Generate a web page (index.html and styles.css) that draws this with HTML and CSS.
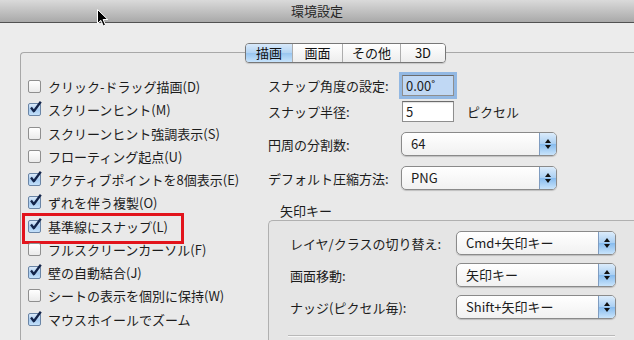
FILE: index.html
```html
<!DOCTYPE html>
<html lang="ja">
<head>
  <meta charset="UTF-8" />
  <title>環境設定</title>
  <link rel="stylesheet" href="styles.css">
</head>
<body>

<div class="window">
  <div class="titlebar">環境設定</div>

  <svg class="cursor" width="14" height="20" viewBox="0 0 14 20">
    <path d="M1.5 1.5 V15.5 L4.8 12.3 L7.3 18 L9.5 17 L7.1 11.5 H11.8 Z" fill="#000" stroke="#fff" stroke-width="1"/>
  </svg>

  <div class="tabbox">
    <div class="tabs">
      <span class="tab active">描画</span>
      <span class="tab">画面</span>
      <span class="tab">その他</span>
      <span class="tab">3D</span>
    </div>

    <div class="panel">
      <div class="checks">
        <div class="check"><span class="box"></span>クリック-ドラッグ描画(D)</div>
        <div class="check"><span class="box on"><svg width="16" height="16" viewBox="0 0 16 16"><path d="M3 6.5 L5.8 10.2 L12.8 0.8" /></svg></span>スクリーンヒント(M)</div>
        <div class="check"><span class="box"></span>スクリーンヒント強調表示(S)</div>
        <div class="check"><span class="box"></span>フローティング起点(U)</div>
        <div class="check"><span class="box on"><svg width="16" height="16" viewBox="0 0 16 16"><path d="M3 6.5 L5.8 10.2 L12.8 0.8" /></svg></span>アクティブポイントを8個表示(E)</div>
        <div class="check"><span class="box on"><svg width="16" height="16" viewBox="0 0 16 16"><path d="M3 6.5 L5.8 10.2 L12.8 0.8" /></svg></span>ずれを伴う複製(O)</div>
        <div class="check marked"><span class="box on"><svg width="16" height="16" viewBox="0 0 16 16"><path d="M3 6.5 L5.8 10.2 L12.8 0.8" /></svg></span>基準線にスナップ(L)</div>
        <div class="check"><span class="box"></span>フルスクリーンカーソル(F)</div>
        <div class="check"><span class="box on"><svg width="16" height="16" viewBox="0 0 16 16"><path d="M3 6.5 L5.8 10.2 L12.8 0.8" /></svg></span>壁の自動結合(J)</div>
        <div class="check"><span class="box"></span>シートの表示を個別に保持(W)</div>
        <div class="check"><span class="box on"><svg width="16" height="16" viewBox="0 0 16 16"><path d="M3 6.5 L5.8 10.2 L12.8 0.8" /></svg></span>マウスホイールでズーム</div>
      </div>

      <div class="settings">
        <div class="row">
          <span class="label">スナップ角度の設定:</span>
          <span class="field focus">0.00˚</span>
        </div>
        <div class="row">
          <span class="label">スナップ半径:</span>
          <span class="field">5</span>
          <span class="unit">ピクセル</span>
        </div>
        <div class="row tall gap">
          <span class="label">円周の分割数:</span>
          <span class="popup"><span class="value">64</span><span class="stepper"><i class="up"></i><i class="down"></i></span></span>
        </div>
        <div class="row tall">
          <span class="label">デフォルト圧縮方法:</span>
          <span class="popup"><span class="value">PNG</span><span class="stepper"><i class="up"></i><i class="down"></i></span></span>
        </div>

        <div class="group-title">矢印キー</div>
        <div class="group">
          <div class="row">
            <span class="label">レイヤ/クラスの切り替え:</span>
            <span class="popup wide"><span class="value">Cmd+矢印キー</span><span class="stepper"><i class="up"></i><i class="down"></i></span></span>
          </div>
          <div class="row">
            <span class="label">画面移動:</span>
            <span class="popup wide"><span class="value">矢印キー</span><span class="stepper"><i class="up"></i><i class="down"></i></span></span>
          </div>
          <div class="row">
            <span class="label">ナッジ(ピクセル毎):</span>
            <span class="popup wide"><span class="value">Shift+矢印キー</span><span class="stepper"><i class="up"></i><i class="down"></i></span></span>
          </div>
          <div class="sep"></div>
        </div>
      </div>
    </div>
  </div>
</div>

</body>
</html>
```

FILE: styles.css
```css
* {
  box-sizing: border-box;
}

html, body {
  margin: 0;
  padding: 0;
}

body {
  width: 634px;
  height: 340px;
  overflow: hidden;
  background: #ececec;
  font-family: "Noto Sans CJK JP", "Noto Sans", sans-serif;
  font-size: 13px;
  color: #1c1c1c;
}

.window {
  position: relative;
  height: 340px;
}

.titlebar {
  height: 23px;
  border-bottom: 1px solid #525252;
  background: linear-gradient(#dadada, #a9a9a9);
  text-align: center;
  line-height: 22px;
  color: #262626;
}

.cursor {
  position: absolute;
  left: 96px;
  top: 8px;
}

.tabbox {
  margin: 29px 0 0 20px;
  width: 614px;
  height: 288px;
  border-top: 1px solid #a8a8a8;
  border-left: 1px solid #a8a8a8;
  border-top-left-radius: 4px;
  background: #e9e9e9;
}

.tabs {
  display: flex;
  width: fit-content;
  height: 20px;
  margin: -10px 0 0 224px;
  border: 1px solid #777;
  border-radius: 4px;
  overflow: hidden;
  box-shadow: 0 1px 1px rgba(0, 0, 0, 0.15);
}

.tab {
  line-height: 18px;
  text-align: center;
  background: linear-gradient(#ffffff, #ededed);
  border-left: 1px solid #adadad;
  color: #111;
}

.tab:nth-child(1) { width: 46px; border-left: none; }
.tab:nth-child(2) { width: 50px; }
.tab:nth-child(3) { width: 58px; }
.tab:nth-child(4) { width: 45px; }

.tab.active {
  background: linear-gradient(#d8e9fa, #b2d3f3 50%, #98c5f0 51%, #c7e3fb);
}

.panel {
  display: flex;
}

/* left column */
.checks {
  width: 247px;
  flex: none;
  padding: 12px 0 0 7px;
}

.check {
  position: relative;
  display: flex;
  align-items: center;
  gap: 7px;
  height: 23.25px;
  white-space: nowrap;
}

.check.marked::after {
  content: "";
  position: absolute;
  left: -6px;
  top: -2px;
  width: 156px;
  height: 25px;
  border: 3px solid #e2141c;
}

.box {
  position: relative;
  flex: none;
  width: 13px;
  height: 13px;
  border: 1px solid #8f8f8f;
  border-radius: 2px;
  background: linear-gradient(#ffffff, #ebebeb);
}

.box.on {
  border-color: #6a85a6;
  background: linear-gradient(#dbeafa, #a7ccf1 55%, #c4e0fa);
}

.box svg {
  position: absolute;
  left: -1px;
  top: -3px;
}

.box svg path {
  fill: none;
  stroke: #13244a;
  stroke-width: 2.3;
  stroke-linejoin: round;
}

/* right column */
.settings {
  flex: 1;
  padding-top: 9px;
}

.row {
  display: flex;
  align-items: center;
  height: 26px;
  white-space: nowrap;
}

.row.tall {
  height: 34px;
}

.row.gap {
  margin-top: 3px;
}

.label {
  width: 134px;
  flex: none;
}

.field {
  width: 52px;
  height: 21px;
  padding-left: 3px;
  line-height: 19px;
  border: 1px solid #8e8e8e;
  border-top-color: #6c6c6c;
  background: #fff;
  box-shadow: inset 0 1px 1px rgba(0, 0, 0, 0.12);
}

.field.focus {
  background: #c0d8f4;
  box-shadow: 0 0 0 3px #92b8e3;
}

.unit {
  margin-left: 13px;
}

.popup {
  display: flex;
  width: 156px;
  height: 24px;
  margin-left: -1px;
  border: 1px solid #8a8a8a;
  border-radius: 5px;
  overflow: hidden;
  background: linear-gradient(#ffffff, #f1f1f1);
  box-shadow: 0 1px 1px rgba(0, 0, 0, 0.18);
}

.popup.wide {
  width: 160px;
}

.popup .value {
  flex: 1;
  padding-left: 9px;
  line-height: 22px;
}

.stepper {
  width: 17px;
  display: flex;
  flex-direction: column;
  align-items: center;
  justify-content: center;
  gap: 2px;
  border-left: 1px solid #7f9cc0;
  background: linear-gradient(#dcecfb, #a9cff3 50%, #86bbee 51%, #c9e4fb);
}

.stepper .up {
  border-left: 3px solid transparent;
  border-right: 3px solid transparent;
  border-bottom: 4px solid #111;
}

.stepper .down {
  border-left: 3px solid transparent;
  border-right: 3px solid transparent;
  border-top: 4px solid #111;
}

.group-title {
  margin: 8px 0 0 12px;
  line-height: 16px;
}

.group {
  margin-top: 1px;
  width: 366px;
  height: 120px;
  padding: 6px 0 0 21px;
  border-top: 1px solid #b0b0b0;
  border-left: 1px solid #b0b0b0;
  border-top-left-radius: 5px;
  background: #e5e5e5;
}

.group .row {
  height: 32px;
}

.group .label {
  width: 167px;
}

.sep {
  width: 327px;
  height: 2px;
  margin: 12px 0 0 -2px;
  border-top: 1px solid #b9b9b9;
  border-bottom: 1px solid #f7f7f7;
}
```
